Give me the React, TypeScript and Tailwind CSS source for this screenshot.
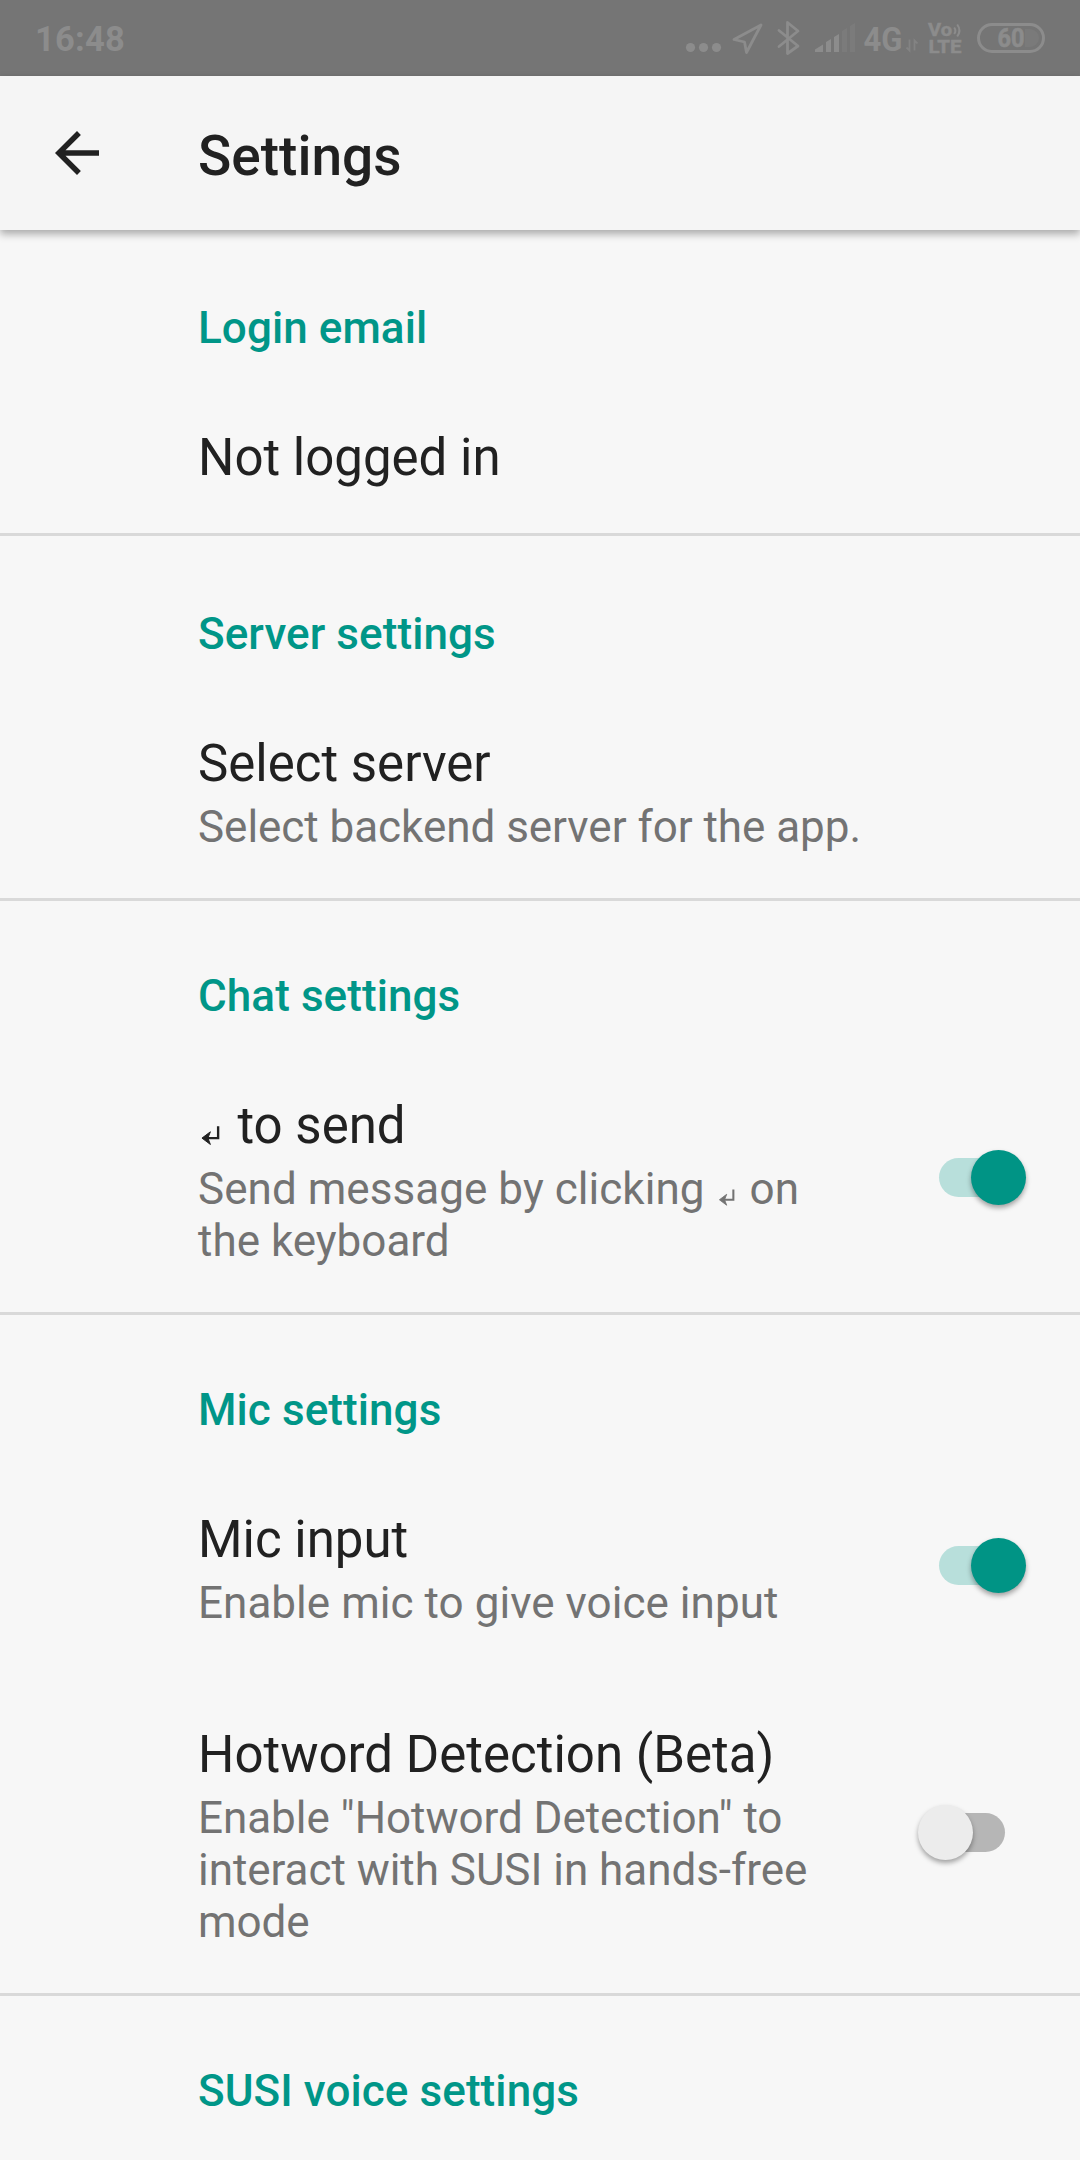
import React from "react";

function StatusBar() {
  return (
    <header className="flex h-[76px] items-center bg-[#757575] text-[#8c8c8c]">
      <span className="mt-[2px] ml-[35px] text-[34.5px] leading-none font-bold tracking-[0.2px]">16:48</span>
      <svg className="ml-auto" width="400" height="76" viewBox="680 0 400 76" fill="none" stroke="#8c8c8c">
        <g fill="#8c8c8c" stroke="none">
          <circle cx="690.5" cy="47.5" r="4.6" />
          <circle cx="703.5" cy="47.5" r="4.6" />
          <circle cx="716.5" cy="47.5" r="4.6" />
          <path d="M815 52v-2.5l8-5V52zM826 42l5-3v13h-5zM834 37l5-3v18h-5z" />
          <path d="M842 31l5-3v24h-5zM850 26l5-3v29h-5z" opacity=".3" />
        </g>
        <path d="M761 25L734 39.500L744.500 42L746.500 52.500Z" strokeWidth="2.8" strokeLinejoin="round" />
        <path d="M779 30.500L798 46L787.500 53.500V22.500L798 31L779 46.500" strokeWidth="2.8" strokeLinejoin="round" strokeLinecap="round" />
        <text x="863.500" y="50.500" fontSize="33" fontWeight="700" fill="#8c8c8c" stroke="none" textLength="39" lengthAdjust="spacingAndGlyphs">4G</text>
        <path d="M909.500 39.500V50.500L906.500 47.500M914.500 50.500V40.500L917.500 43.500" strokeWidth="1.8" opacity=".6" />
        <text x="928" y="35.500" fontSize="18" fontWeight="700" fill="#8c8c8c" stroke="#8c8c8c" strokeWidth="0.5" textLength="24" lengthAdjust="spacingAndGlyphs">Vo</text>
        <path d="M954.200 27.500q2.400 3.200 0 6.500M957.200 24.500q4.500 6 0 12" strokeWidth="2" />
        <text x="928.500" y="53" fontSize="18.500" fontWeight="700" fill="#8c8c8c" stroke="#8c8c8c" strokeWidth="0.5" textLength="33" lengthAdjust="spacingAndGlyphs">LTE</text>
        <rect x="978.500" y="24.500" width="65" height="27" rx="13.500" strokeWidth="3" />
        <path d="M1025 29h5a9 9 0 0 1 0 18h-5z" fill="#7a7a7a" stroke="none" />
        <text x="997.500" y="46.800" fontSize="25" fontWeight="700" fill="#8c8c8c" stroke="#8c8c8c" strokeWidth="0.6" textLength="27" lengthAdjust="spacingAndGlyphs">60</text>
      </svg>
    </header>
  );
}

function AppBar() {
  return (
    <div className="relative flex h-[154px] items-center bg-[#f5f5f5] shadow-[0_4px_8px_rgba(0,0,0,0.32)]">
      <svg className="ml-[44px]" width="66" height="66" viewBox="0 0 24 24" fill="#212121">
        <path d="M20 11H7.830l5.590-5.590L12 4l-8 8 8 8 1.410-1.410L7.830 13H20z" />
      </svg>
      <h1 className="mt-[6px] ml-[88px] text-[55px] leading-[64px] font-medium">Settings</h1>
    </div>
  );
}

function ReturnKey() {
  return (
    <svg className="inline-block h-[0.44em] w-[0.525em] overflow-visible align-baseline" viewBox="0 0 27 22.500" fill="none" stroke="currentColor">
      <path d="M20.300 5.300V17.200H8" strokeWidth="2.400" />
      <path d="M4 17.200L12.500 10.800L10 17.200L12.500 23.600Z" fill="currentColor" />
    </svg>
  );
}

function Toggle({ on }: { on?: boolean }) {
  return on ? (
    <div className="relative mb-[8px] h-[39px] w-[88px]">
      <div className="h-[39px] w-[70px] rounded-full bg-[#b8dfdb]" />
      <div className="absolute top-[-8px] right-[1px] size-[55px] rounded-full bg-[#009485] shadow-[0_3px_5px_rgba(0,0,0,0.35)]" />
    </div>
  ) : (
    <div className="relative mr-[22px] mb-[8px] h-[39px] w-[88px]">
      <div className="ml-[18px] h-[39px] w-[70px] rounded-full bg-[#b6b6b6]" />
      <div className="absolute top-[-8px] left-[0.5px] size-[55px] rounded-full bg-[#ececec] shadow-[0_3px_5px_rgba(0,0,0,0.35)]" />
    </div>
  );
}

function Category({ children }: { children: React.ReactNode }) {
  return <h2 className="text-[44px] leading-[52px] font-medium tracking-[0.08px] text-[#009688]">{children}</h2>;
}

function Row({ title, summary, toggle, className = "mt-[74px]" }: { title: React.ReactNode; summary?: React.ReactNode; toggle?: React.ReactNode; className?: string }) {
  return (
    <div className={"flex items-center justify-between pr-[53px] " + className}>
      <div>
        <div className="h-[60px] text-[51px] leading-[60px] whitespace-nowrap">{title}</div>
        {summary && <div className="mt-[7px] text-[44px] leading-[52px] whitespace-nowrap text-[#737373]">{summary}</div>}
      </div>
      {toggle}
    </div>
  );
}

function Section({ children, className }: { children: React.ReactNode; className: string }) {
  return <section className={"border-[#d9d9d9] pl-[198px] " + className}>{children}</section>;
}

export default function App() {
  return (
    <div className="h-[2160px] w-[1080px] overflow-hidden bg-[#f7f7f7] font-['Roboto',sans-serif] text-[#212121]">
      <StatusBar />
      <AppBar />
      <main>
        <Section className="h-[306px] border-b-[3px] pt-[72px]">
          <Category>Login email</Category>
          <Row title="Not logged in" />
        </Section>
        <Section className="h-[365px] border-b-[3px] pt-[72px]">
          <Category>Server settings</Category>
          <Row title="Select server" summary={<span className="tracking-[-0.04px]">Select backend server for the app.</span>} />
        </Section>
        <Section className="h-[414px] border-b-[3px] pt-[69px]">
          <Category>Chat settings</Category>
          <Row
            title={<><ReturnKey /> to send</>}
            summary={<><span className="tracking-[0.05px]">Send message by clicking </span><ReturnKey /> on<br />the keyboard</>}
            toggle={<Toggle on />}
          />
        </Section>
        <Section className="h-[681px] border-b-[3px] pt-[69px]">
          <Category>Mic settings</Category>
          <Row title="Mic input" summary={<span className="tracking-[0.04px]">Enable mic to give voice input</span>} toggle={<Toggle on />} />
          <Row
            className="mt-[96px]"
            title="Hotword Detection (Beta)"
            summary={<span className="tracking-[-0.04px]">Enable "Hotword Detection" to<br />interact with SUSI in hands-free<br />mode</span>}
            toggle={<Toggle />}
          />
        </Section>
        <Section className="pt-[69px]">
          <Category>SUSI voice settings</Category>
        </Section>
      </main>
    </div>
  );
}
